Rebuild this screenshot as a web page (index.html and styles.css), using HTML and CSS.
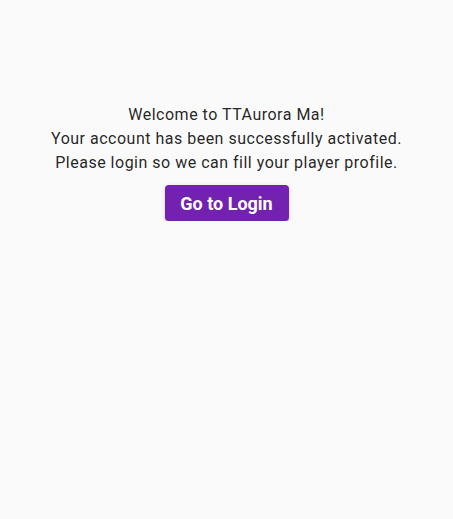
FILE: index.html
```
<!DOCTYPE html>
<html>
	<head>
		<meta charset="UTF-8">
		<title>Account activated</title>
		<link rel="stylesheet" href="styles.css">
	</head>
	<body>
		<div class="page">
			<!--message-->
			<div class="msg">
				<p>Welcome to TTAurora Ma!</p>
				<p>Your account has been successfully activated.</p>
				<p>Please login so we can fill your player profile.</p>
			</div>
			<button class="btn">Go to Login</button>
		</div>
	</body>
</html>
```
FILE: styles.css
```
*{
	margin: 0;
	padding: 0;
}
body{
	background: #fafafa;
	font-family: Roboto, "Liberation Sans", sans-serif;
}
.page{
	display: flex;
	flex-direction: column;
	align-items: center;
	padding-top: 103px;
}
.msg{
	text-align: center;
	font-size: 16px;
	line-height: 24px;
	letter-spacing: 0.5px;
	color: rgba(0,0,0,0.87);
}
.btn{
	margin-top: 10px;
	width: 124px;
	height: 36px;
	border: none;
	border-radius: 4px;
	background: #7321b1;
	color: #fff;
	font-family: Roboto, "Liberation Sans", sans-serif;
	font-size: 18px;
	font-weight: 700;
	box-shadow: 0 3px 1px -2px rgba(0,0,0,0.2), 0 2px 2px 0 rgba(0,0,0,0.14), 0 1px 5px 0 rgba(0,0,0,0.12);
	cursor: pointer;
}
```
